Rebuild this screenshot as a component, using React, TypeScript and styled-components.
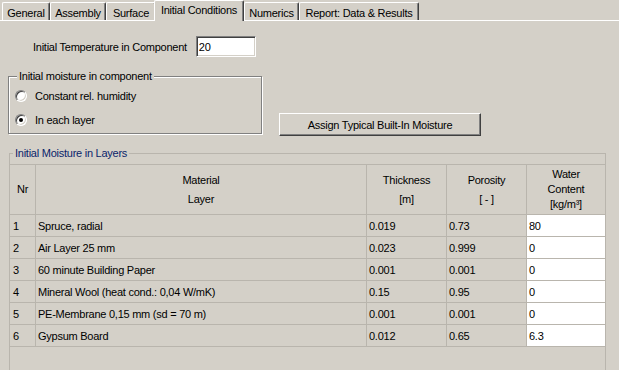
import styled, { createGlobalStyle } from 'styled-components';

const GlobalStyle = createGlobalStyle`
	html, body {
		margin: 0;
		padding: 0;
		background: #d4d0c8;
	}
	body {
		font-family: "Liberation Sans", Arial, sans-serif;
		font-size: 11px;
		letter-spacing: -0.25px;
		color: #000;
	}
`;

interface TabInfo {
	label: string;
	width: number;
	active?: boolean;
}

const tabs: TabInfo[] = [
	{ label: 'General', width: 48 },
	{ label: 'Assembly', width: 56 },
	{ label: 'Surface', width: 50 },
	{ label: 'Initial Conditions', width: 90, active: true },
	{ label: 'Numerics', width: 55 },
	{ label: 'Report: Data & Results', width: 120 },
];

interface Layer {
	nr: number;
	name: string;
	thickness: string;
	porosity: string;
	water: string;
}

const layers: Layer[] = [
	{ nr: 1, name: 'Spruce, radial', thickness: '0.019', porosity: '0.73', water: '80' },
	{ nr: 2, name: 'Air Layer 25 mm', thickness: '0.023', porosity: '0.999', water: '0' },
	{ nr: 3, name: '60 minute Building Paper', thickness: '0.001', porosity: '0.001', water: '0' },
	{ nr: 4, name: 'Mineral Wool (heat cond.: 0,04 W/mK)', thickness: '0.15', porosity: '0.95', water: '0' },
	{ nr: 5, name: 'PE-Membrane 0,15 mm (sd = 70 m)', thickness: '0.001', porosity: '0.001', water: '0' },
	{ nr: 6, name: 'Gypsum Board', thickness: '0.012', porosity: '0.65', water: '6.3' },
];

const App = () => {
	return (
		<StyledWindow>
			<GlobalStyle />
			<StyledTabStrip>
				{tabs.map((t) => (
					<StyledTab key={t.label} $width={t.width} $active={t.active}>
						{t.label}
					</StyledTab>
				))}
			</StyledTabStrip>
			<StyledPage>
				<StyledTempRow>
					<span>Initial Temperature in Component</span>
					<StyledTextInput value="20" readOnly />
				</StyledTempRow>

				<StyledMiddleRow>
					<StyledFrame $width={254}>
						<StyledCaption>Initial moisture in component</StyledCaption>
						<StyledRadioList>
							<StyledRadioRow>
								<StyledRadio />
								Constant rel. humidity
							</StyledRadioRow>
							<StyledRadioRow>
								<StyledRadio $checked />
								In each layer
							</StyledRadioRow>
						</StyledRadioList>
					</StyledFrame>
					<StyledButton>Assign Typical Built-In Moisture</StyledButton>
				</StyledMiddleRow>

				<StyledLayersFrame $width={597}>
					<StyledCaption $navy>Initial Moisture in Layers</StyledCaption>
					<StyledGrid>
						<StyledHeadCell>Nr</StyledHeadCell>
						<StyledHeadCell $lh={19}>
							<span>Material</span>
							<span>Layer</span>
						</StyledHeadCell>
						<StyledHeadCell $lh={19}>
							<span>Thickness</span>
							<span>[m]</span>
						</StyledHeadCell>
						<StyledHeadCell $lh={19}>
							<span>Porosity</span>
							<span>[ - ]</span>
						</StyledHeadCell>
						<StyledHeadCell $lh={15} $last>
							<span>Water</span>
							<span>Content</span>
							<span>[kg/m³]</span>
						</StyledHeadCell>
						{layers.map((l) => (
							<StyledRowGroup key={l.nr}>
								<StyledCell $pad={3}>{l.nr}</StyledCell>
								<StyledCell>{l.name}</StyledCell>
								<StyledCell>{l.thickness}</StyledCell>
								<StyledCell>{l.porosity}</StyledCell>
								<StyledCell $editable $last>
									{l.water}
								</StyledCell>
							</StyledRowGroup>
						))}
					</StyledGrid>
				</StyledLayersFrame>
			</StyledPage>
		</StyledWindow>
	);
};

export default App;

const GRID_LINE = '#b9b5ad';

const StyledWindow = styled.div`
	width: 619px;
	height: 370px;
	overflow: hidden;
	background: #d4d0c8;
`;

const StyledTabStrip = styled.div`
	display: flex;
	align-items: flex-end;
	height: 20px;
	padding-left: 2px;
`;

const StyledTab = styled.div<{ $width: number; $active?: boolean }>`
	box-sizing: border-box;
	position: relative;
	z-index: ${(p) => (p.$active ? 1 : 0)};
	width: ${(p) => p.$width}px;
	height: ${(p) => (p.$active ? 21 : 18)}px;
	margin-left: ${(p) => (p.$active ? -2 : 0)}px;
	margin-bottom: ${(p) => (p.$active ? -1 : 0)}px;
	padding-top: ${(p) => (p.$active ? 0 : 2)}px;
	padding-bottom: ${(p) => (p.$active ? 2 : 0)}px;
	display: flex;
	align-items: center;
	justify-content: center;
	white-space: nowrap;
	background: #d4d0c8;
	border-top: 1px solid #fff;
	border-left: 1px solid #fff;
	border-right: 1px solid #404040;
	border-radius: 2px 2px 0 0;
	box-shadow: inset -1px 0 0 #808080;
`;

const StyledPage = styled.div`
	border-top: 1px solid #fff;
`;

const StyledTempRow = styled.div`
	display: flex;
	align-items: center;
	gap: 9px;
	margin-top: 15px;
	padding-left: 33px;
`;

const StyledTextInput = styled.input`
	box-sizing: border-box;
	width: 60px;
	height: 21px;
	margin: 0;
	padding: 0 2px;
	font: inherit;
	letter-spacing: inherit;
	color: #000;
	background: #fff;
	border: 1px solid;
	border-color: #808080 #fff #fff #808080;
	box-shadow: inset 1px 1px 0 #404040, inset -1px -1px 0 #d4d0c8;
	outline: none;
`;

const StyledMiddleRow = styled.div`
	display: flex;
	align-items: flex-end;
	gap: 17px;
	margin-top: 19px;
	padding-left: 8px;
`;

const StyledFrame = styled.div<{ $width: number }>`
	box-sizing: border-box;
	width: ${(p) => p.$width}px;
	display: flex;
	flex-direction: column;
	border: 1px solid #808080;
	box-shadow: inset 1px 1px 0 #fff, 1px 1px 0 #fff;
`;

const StyledLayersFrame = styled(StyledFrame)`
	height: 240px;
	margin: 19px 0 0 9px;
	border-color: ${GRID_LINE};
	box-shadow: none;
`;

const StyledCaption = styled.div<{ $navy?: boolean }>`
	align-self: flex-start;
	margin: -7px 0 0 ${(p) => (p.$navy ? 3 : 8)}px;
	padding: 0 2px;
	line-height: 13px;
	background: #d4d0c8;
	color: ${(p) => (p.$navy ? '#0a246a' : '#000')};
`;

const StyledRadioList = styled.div`
	display: flex;
	flex-direction: column;
	padding: 1px 0 1px 6px;
`;

const StyledRadioRow = styled.div`
	display: flex;
	align-items: center;
	gap: 8px;
	height: 24px;
`;

const StyledRadio = styled.span<{ $checked?: boolean }>`
	box-sizing: border-box;
	width: 12px;
	height: 12px;
	border-radius: 50%;
	border: 1px solid;
	border-color: #808080 #fff #fff #808080;
	box-shadow: inset 1px 1px 0 #404040, inset -1px -1px 0 #d4d0c8;
	background: #fff;
	display: flex;
	align-items: center;
	justify-content: center;

	&::after {
		content: '';
		display: ${(p) => (p.$checked ? 'block' : 'none')};
		width: 4px;
		height: 4px;
		border-radius: 50%;
		background: #000;
	}
`;

const StyledButton = styled.button`
	box-sizing: border-box;
	width: 202px;
	height: 23px;
	margin: 0 0 -2px 0;
	padding: 0;
	font: inherit;
	letter-spacing: inherit;
	color: #000;
	background: #d4d0c8;
	border: 1px solid;
	border-color: #fff #404040 #404040 #fff;
	box-shadow: inset -1px -1px 0 #808080;
`;

const StyledGrid = styled.div`
	display: grid;
	grid-template-columns: 26px 331px 80px 80px 78px;
	grid-auto-rows: 22px;
	grid-template-rows: 50px;
	margin-top: 4px;
	border-top: 1px solid ${GRID_LINE};
`;

const StyledRowGroup = styled.div`
	display: contents;
`;

const StyledHeadCell = styled.div<{ $lh?: number; $last?: boolean }>`
	box-sizing: border-box;
	display: flex;
	flex-direction: column;
	align-items: center;
	justify-content: center;
	text-align: center;
	line-height: ${(p) => p.$lh ?? 13}px;
	border-bottom: 1px solid ${GRID_LINE};
	border-right: ${(p) => (p.$last ? 'none' : `1px solid ${GRID_LINE}`)};
`;

const StyledCell = styled.div<{ $pad?: number; $editable?: boolean; $last?: boolean }>`
	box-sizing: border-box;
	display: flex;
	align-items: center;
	padding-left: ${(p) => p.$pad ?? 2}px;
	white-space: nowrap;
	background: ${(p) => (p.$editable ? '#fff' : 'transparent')};
	border-bottom: 1px solid ${GRID_LINE};
	border-right: ${(p) => (p.$last ? 'none' : `1px solid ${GRID_LINE}`)};
`;
